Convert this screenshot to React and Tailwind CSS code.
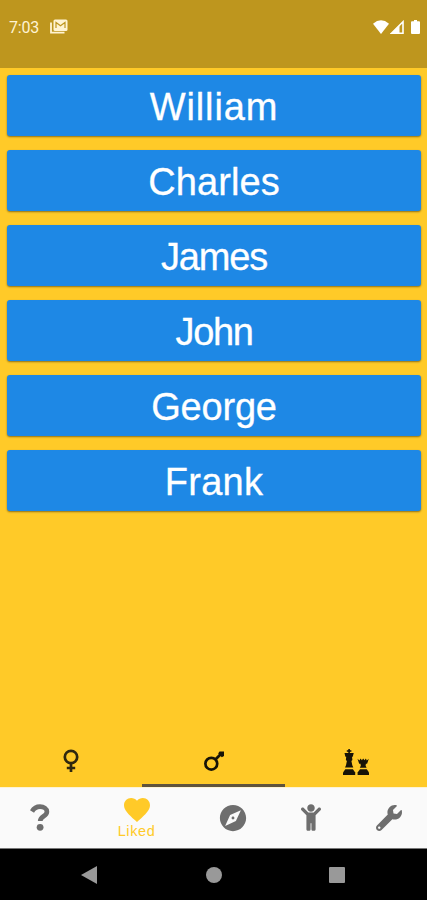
import { FaChild, FaWrench } from 'react-icons/fa';
import { IoMdHeart, IoMdCompass } from 'react-icons/io';

const names = [
  { label: 'William', tracking: 'tracking-[0.9px]' },
  { label: 'Charles', tracking: 'tracking-[0.1px]' },
  { label: 'James', tracking: 'tracking-[-1.2px]' },
  { label: 'John', tracking: 'tracking-[-1.4px]' },
  { label: 'George', tracking: 'tracking-[-0.2px]' },
  { label: 'Frank', tracking: 'tracking-[0.3px]' },
];

function StatusBar() {
  return (
    <header className="flex h-[68px] shrink-0 items-start bg-[#be961e] pt-[19px] pl-[9px] pr-[7px] text-[#fff3d2]">
      <span className="font-['Roboto',sans-serif] text-[16px] leading-[18px] tracking-[-0.2px]">7:03</span>
      <svg className="ml-[11px] h-[15px] w-[18px]" viewBox="0 0 18 15">
        <path d="M1 3.5v10.2h13.5" fill="none" stroke="currentColor" strokeWidth="1.8" />
        <rect x="3.5" y="0.5" width="14" height="11.5" rx="1.5" fill="currentColor" />
        <path d="M6 9V3.500l4.500 3.300L15 3.500V9" fill="none" stroke="#be961e" strokeWidth="1.2" />
      </svg>
      <div className="ml-auto flex items-end text-white">
        <svg className="mt-px h-[14px] w-4" viewBox="0 0 16 14">
          <path d="M8 14 0 3.7Q8-3.2 16 3.7Z" fill="currentColor" />
        </svg>
        <svg className="ml-[1px] h-[14px] w-[14px]" viewBox="0 0 14 14">
          <path d="M1.5 13.2 13 1.8v11.4Z" fill="none" stroke="currentColor" strokeWidth="1.6" />
          <path d="M1 13.5 9.5 5v8.5Z" fill="currentColor" />
        </svg>
        <svg className="ml-[7px] h-[14px] w-[9px]" viewBox="0 0 9 14">
          <path d="M3 0h3v1.3h2a1 1 0 0 1 1 1V13a1 1 0 0 1-1 1H1a1 1 0 0 1-1-1V2.300a1 1 0 0 1 1-1h2Z" fill="currentColor" />
        </svg>
      </div>
    </header>
  );
}

function FemaleIcon() {
  return (
    <svg className="h-6 w-4" viewBox="0 0 16 24" fill="none" stroke="#30280f" strokeWidth="2.7">
      <circle cx="8" cy="8" r="6.2" />
      <path d="M8 14.2V23M3.8 19h8.4" />
    </svg>
  );
}

function MaleIcon() {
  return (
    <svg className="ml-px h-5 w-5" viewBox="0 0 20 20" fill="none" stroke="#171307" strokeWidth="2.7">
      <circle cx="7.3" cy="12.7" r="5.9" />
      <path d="m11.4 8.500 5-5" />
      <path d="M15.500 0.500H20v4.500l-2.200 1.200-3.600-3.600Z" fill="#171307" stroke="none" />
    </svg>
  );
}

function ChessIcon() {
  return (
    <svg className="h-[26px] w-[26px]" viewBox="0 0 26 26" fill="#171307">
      {/* king */}
      <path d="M5.300 0h1.600v1.300h1.500v1.500H6.900V4h3.800l-.9 3.800H9l.4 3.200-1 1 .9 4.200 1 2.300H2l1-2.300.9-4.200-1-1 .3-3.200h-.8L1.500 4h3.800V2.800H3.800V1.300h1.500Z" />
      <path d="M2.300 20.300h7.600l2.300 3.200V26H0v-2.500Z" />
      {/* queen */}
      <path d="m14.500 9.800 2 1.800 1-2.200 1.400 1.900 1.300-1.900L21.500 11.300l1.400-1.900.9 2.200 2-1.800-1.700 5h-1.200l-.3 2 1 2h-6.800l1-2-.3-2h-1.300Z" />
      <path d="M17 20.300h6.800l2.200 3.200V26H14.600v-2.500Z" />
    </svg>
  );
}

function HelpIcon() {
  return (
    <svg className="h-[27px] w-5" viewBox="0 0 20 27">
      <path
        d="M2 7.500C4 4 6.500 2.700 10 2.700c4 0 6.900 2 6.900 5 0 4.800-6.700 4.300-6.700 9.300"
        fill="none"
        stroke="currentColor"
        strokeWidth="4.700"
      />
      <circle cx="10.100" cy="23.300" r="3.400" fill="currentColor" />
    </svg>
  );
}

function GenderTabs() {
  return (
    <div className="grid h-[53px] shrink-0 grid-cols-3">
      <div className="flex items-center justify-center pt-px">
        <FemaleIcon />
      </div>
      <div className="flex items-center justify-center border-b-[3px] border-[#5f533c] pt-1">
        <MaleIcon />
      </div>
      <div className="flex items-center justify-center pt-[2px]">
        <ChessIcon />
      </div>
    </div>
  );
}

function BottomNav() {
  return (
    <nav className="flex h-[61px] shrink-0 border-t border-[#fdf3d5] bg-[#fafafa] text-[#6e6e6e]">
      <div className="flex w-[79px] items-center justify-center pb-px">
        <HelpIcon />
      </div>
      <div className="flex w-[115px] flex-col items-center pt-[6px] text-[#ffca28]">
        <IoMdHeart className="size-[32px]" />
        <span className="-mt-[3px] font-['Liberation_Sans',sans-serif] text-[14.5px] leading-[16px] tracking-[0.6px]">Liked</span>
      </div>
      <div className="flex w-[78px] items-center justify-center pb-px">
        <IoMdCompass className="size-[30px]" />
      </div>
      <div className="flex w-[78px] items-center justify-center pb-px">
        <FaChild className="h-[27px] w-[20px]" />
      </div>
      <div className="flex w-[77px] items-center justify-center pb-px">
        <FaWrench className="size-[26px]" />
      </div>
    </nav>
  );
}

function SystemNav() {
  return (
    <footer className="flex h-[52px] shrink-0 items-center border-t border-[#777] bg-black pl-[81px] pr-[82px] text-[#999]">
      <svg className="h-[18px] w-4" viewBox="0 0 16 18">
        <path d="M0 9 16 0v18Z" fill="currentColor" />
      </svg>
      <div className="ml-[109px] size-4 rounded-full bg-[#999]" />
      <div className="ml-auto size-4 rounded-[1px] bg-[#999]" />
    </footer>
  );
}

export default function App() {
  return (
    <div className="flex h-[900px] w-[427px] flex-col overflow-hidden bg-[#ffca28]">
      <StatusBar />
      <main className="flex flex-1 flex-col gap-[13.5px] pt-[6.5px] pr-[6px] pl-[7px]">
        {names.map(({ label, tracking }) => (
          <button
            key={label}
            className={`h-[61.5px] w-full shrink-0 rounded-[3px] bg-[#1e88e5] pt-[4px] text-center font-['Liberation_Sans',sans-serif] text-[38px] leading-none text-white shadow-[0_1px_2px_rgba(0,0,0,0.45)] [-webkit-text-stroke:0.3px_white] ${tracking}`}
          >
            {label}
          </button>
        ))}
      </main>
      <GenderTabs />
      <BottomNav />
      <SystemNav />
    </div>
  );
}
